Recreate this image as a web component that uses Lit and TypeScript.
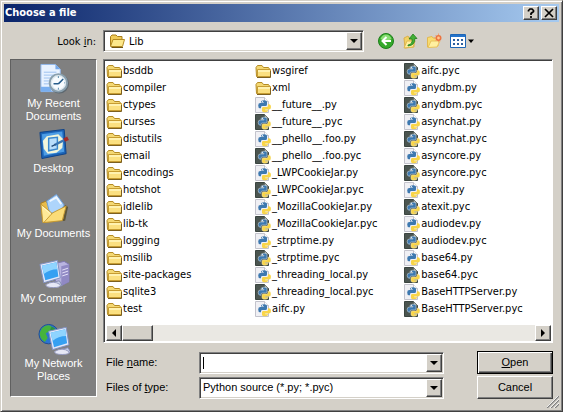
import { LitElement, html, css, svg } from "lit";
import { customElement } from "lit/decorators.js";

const folder = svg`
  <path d="M1 4.5 2.5 2.5H7L8.5 4.5H13.5L14.5 6V13.5H1.5Z" fill="#f4d873" stroke="#b48b24"/>
  <path d="M2.5 6.5H15.5V13.5H2.5Z" fill="#fbe080" stroke="#c79d32"/>
  <path d="M3 7.5H15M3 8.5H15" stroke="#fff2b0"/>
  <path d="M2 14.5H15.5V8" fill="none" stroke="#7c6020"/>`;

const openFolder = svg`
  <path d="M1.5 13V3.5L3 2H7L8.5 3.5H13V6" fill="#f0cb58" stroke="#a97e1b"/>
  <path d="M1.5 13.5 4 6.5H15.5L13.5 13.5Z" fill="#fde88b" stroke="#b48b24"/>
  <path d="M2.5 14.5H14" stroke="#6f5412"/>`;

const python = (compiled: boolean) => svg`
  <path d="M0.5 0.5H9.5L13.5 4.5V15.5H0.5Z" fill="${compiled ? "#4b5550" : "#f0f0f4"}" stroke="${compiled ? "#3b4540" : "#c3c3cc"}"/>
  <path d="M9.5 0.5V4.5H13.5" fill="${compiled ? "#a9b0ac" : "#fff"}" stroke="${compiled ? "#5b6560" : "#c3c3cc"}"/>
  <path d="M9 3.2C11.5 3.2 12 4 12 5.2V7.4Q12 9 10.4 9H7.4Q6 9 6 10.4V11.2H5Q3.2 11 3.2 8.4 3.2 6 5.4 6H9V5.4H6V4.8Q6 3.2 9 3.2Z" fill="#3d79b0" stroke="${compiled ? "#dfe6ea" : "none"}" stroke-width=".5"/>
  <path d="M10.2 15.2C7.6 15.2 7 14.4 7 13.4V11.2Q7 10 8.4 10H11.6Q13 10 13 8.4V7.2H14.2Q16 7.4 16 10 16 12.6 13.8 12.6H10.2V13.2H13V13.8Q13 15.2 10.2 15.2Z" fill="#f9d548" stroke="${compiled ? "#f4ecc4" : "none"}" stroke-width=".5"/>
  <circle cx="7.4" cy="4.6" r=".6" fill="#fff"/>`;

const monitor = svg`
  <path d="M13 25 22 23 25 28 15 30Z" fill="#c9cfe8" stroke="#8288b0"/>
  <path d="M8 27Q16 22 23 27 24 30 16 30 8 30 8 27Z" fill="#e6e8f6" stroke="#9499bd"/>
  <path d="M2 6 20 2 23 20 6 25Z" fill="#e3e8fa" stroke="#7f8fc0"/>
  <path d="M4 7.5 19 4 21 18.5 7.5 22.5Z" fill="#36a0f2"/>
  <path d="M4 7.5 19 4 20 11Q12 11 6 16Z" fill="#8fd4ff"/>`;

const places = [
  { label: "My Recent Documents", icon: svg`
    <path d="M3 1H18L23 6V29H3Z" fill="#e8f2ff" stroke="#8fb7ea"/>
    <path d="M18 1V6H23Z" fill="#76a8e8"/>
    <path d="M6 9H19M6 12H17M6 15H14M6 18H13M6 21H13" stroke="#9cc0ee"/>
    <path d="M3 24H14V29H3Z" fill="#78aef0"/>
    <circle cx="22" cy="21" r="10" fill="#5e6870"/>
    <circle cx="21" cy="20" r="9" fill="#dfe9ef" stroke="#8aa0ae" stroke-width="2"/>
    <circle cx="21" cy="20" r="6.5" fill="#f8fcff"/>
    <path d="M21 21 26 16M21 21H16" stroke="#275d8b" stroke-width="1.6"/>
    <path d="M21 13V15M21 25V27M27 20H28" stroke="#58a"/>` },
  { label: "Desktop", icon: svg`
    <path d="M2 4 27 1 29 26 4 31Z" fill="#1c65b8" stroke="#0d4288"/>
    <path d="M4 6 25 3 27 24 6 28Z" fill="#4d9de5"/>
    <path d="M9 8 21 6 26 11 25 20 19 25 10 26 6 21 5 13Z" fill="#f2f6dc"/>
    <path d="M11 10 20 9V21L11 23Z" fill="#b9defb" stroke="#3b88cd" stroke-width="1.5"/>
    <path d="M17 17 27 12" stroke="#3a76b4" stroke-width="2.4"/>
    <path d="M14 18.5 18 16.5" stroke="#1c4674" stroke-width="1.4"/>
    <path d="M27 12 31 10" stroke="#a32b28" stroke-width="4"/>` },
  { label: "My Documents", icon: svg`
    <path d="M5 30 28 28 31 14 28 12" fill="#5c5438"/>
    <path d="M3 10 8 8 12 12 24 12 26 26 5 29Z" fill="#e9bc4a" stroke="#aa7e20"/>
    <path d="M9 8 19 1 27 12 22 20 12 20Z" fill="#aed5fb" stroke="#6c9fdc"/>
    <path d="M12 8 19 4 24 11" fill="none" stroke="#eef7ff" stroke-width="2"/>
    <path d="M3 11 14 20 16 29 5 30Z" fill="#ffe998" stroke="#c69a33"/>
    <path d="M15 20 29 13 25 28 6 30Z" fill="#fbdc78" stroke="#c69a33"/>
    <path d="M5 14 13 21" fill="none" stroke="#fff8cd"/>` },
  { label: "My Computer", icon: svg`
    <path d="M18 5 27 3 32 6V24L24 28 18 24Z" fill="#b9b4e0" stroke="#7f78b3"/>
    <path d="M24 8 32 6V24L24 28Z" fill="#9089c4"/>
    <path d="M25 12 31 10M25 15 31 13M25 18 31 16" stroke="#e6e3fa"/>
    ${monitor}` },
  { label: "My Network Places", icon: svg`
    <circle cx="11" cy="11" r="10" fill="#2c74cf" stroke="#1c4c96"/>
    <path d="M4 5Q9 0 14 3L12 8 8 10 10 15 7 19Q1 15 2 9Z" fill="#46b33c"/>
    <path d="M14 3Q20 5 20 11L15 12 12 8Z" fill="#2d9440"/>
    <g transform="translate(9 2)">${monitor}</g>` },
];

const files = [
  "bsddb", "compiler", "ctypes", "curses", "distutils", "email", "encodings", "hotshot", "idlelib",
  "lib-tk", "logging", "msilib", "site-packages", "sqlite3", "test", "wsgiref", "xml",
  "__future__.py", "__future__.pyc", "__phello__.foo.py", "__phello__.foo.pyc",
  "_LWPCookieJar.py", "_LWPCookieJar.pyc", "_MozillaCookieJar.py", "_MozillaCookieJar.pyc",
  "_strptime.py", "_strptime.pyc", "_threading_local.py", "_threading_local.pyc", "aifc.py",
  "aifc.pyc", "anydbm.py", "anydbm.pyc", "asynchat.py", "asynchat.pyc", "asyncore.py", "asyncore.pyc",
  "atexit.py", "atexit.pyc", "audiodev.py", "audiodev.pyc", "base64.py", "base64.pyc",
  "BaseHTTPServer.py", "BaseHTTPServer.pyc",
];

const iconFor = (name: string) =>
  name.endsWith(".pyc") ? python(true) : name.endsWith(".py") ? python(false) : folder;

const small = (content: unknown) =>
  html`<svg class="small" viewBox="0 0 16 16" aria-hidden="true">${content}</svg>`;

const arrow = (d: string) =>
  html`<svg class="arrow" viewBox="0 0 8 8" aria-hidden="true"><path d=${d} /></svg>`;
const DOWN = "M0 2H8L4 6Z";
const LEFT = "M6 0V8L2 4Z";
const RIGHT = "M2 0V8L6 4Z";

@customElement("app-root")
export class AppRoot extends LitElement {
  static styles = css`
    :host {
      display: block;
      font: 11px/13px "Liberation Sans", Arial, sans-serif;
      color: #000;
    }
    * { box-sizing: border-box; }
    button, input, select { font: inherit; color: inherit; margin: 0; padding: 0; border-radius: 0; }
    svg { display: block; flex: none; }
    .small { width: 16px; height: 16px; }
    .arrow { width: 8px; height: 8px; }
    .tahoma { font-family: "DejaVu Sans Condensed", "DejaVu Sans", sans-serif; }
    .window {
      background: #d4d0c8;
      border: 1px solid;
      border-color: #d4d0c8 #404040 #404040 #d4d0c8;
      box-shadow: inset 1px 1px #fff, inset -1px -1px #808080;
      padding: 3px;
      min-height: 100vh;
      position: relative;
    }
    .title {
      display: flex;
      align-items: center;
      gap: 2px;
      height: 18px;
      padding: 0 2px 0 1px;
      background: linear-gradient(90deg, #0a246a, #a6caf0);
      color: #fff;
    }
    .title h1 { flex: 1; margin: 0; font-size: 11px; line-height: 18px; font-weight: bold; }
    .raised {
      display: flex;
      align-items: center;
      justify-content: center;
      background: #d4d0c8;
      border: 1px solid;
      border-color: #fff #404040 #404040 #fff;
      box-shadow: inset -1px -1px #808080;
      color: #000;
    }
    .title .raised { width: 16px; height: 14px; }
    .glyph { width: 10px; height: 10px; }
    .body {
      display: grid;
      grid-template-columns: 87px minmax(0, 1fr);
      gap: 7px 6px;
      padding: 8px 6px 9px;
    }
    .look { grid-column: 1 / -1; display: flex; align-items: center; }
    .look > label { width: 93px; padding-right: 7px; text-align: right; }
    .field {
      display: flex;
      position: relative;
      height: 22px;
      padding: 1px;
      background: #fff;
      border: 1px solid;
      border-color: #808080 #fff #fff #808080;
      box-shadow: inset 1px 1px #404040, inset -1px -1px #d4d0c8;
    }
    .look .field { flex: 0 1 261px; }
    .field select, .field input {
      flex: 1;
      min-width: 0;
      appearance: none;
      border: 0;
      outline: 0;
      background: transparent;
      padding: 0 18px 0 2px;
    }
    .look select { padding-left: 24px; }
    .field input { background: linear-gradient(#000, #000) 2px 3px / 1px 12px no-repeat; }
    .field .small { position: absolute; left: 5px; top: 2px; }
    .drop { position: absolute; right: 1px; top: 1px; bottom: 1px; width: 16px; pointer-events: none; }
    .tools { display: flex; align-items: center; gap: 8px; margin-left: 14px; }
    .tools button { display: flex; align-items: center; gap: 2px; border: 0; background: none; }
    .tools .tool-arrow { width: 6px; height: 8px; }
    .places {
      display: flex;
      flex-direction: column;
      align-self: start;
      padding: 3px 0 8px;
      background: #808080;
      border: 1px solid;
      border-color: #606060 #fff #fff #606060;
    }
    .place {
      display: flex;
      flex-direction: column;
      align-items: center;
      gap: 2px;
      min-height: 65px;
      padding: 0 8px;
      border: 0;
      background: none;
      color: #fff;
      text-align: center;
    }
    .place.wide { padding: 0; }
    .place svg { width: 32px; height: 32px; }
    .main { display: flex; flex-direction: column; gap: 8px; }
    .list {
      background: #fff;
      border: 1px solid;
      border-color: #808080 #fff #fff #808080;
      box-shadow: inset 1px 1px #404040;
      padding: 2px 1px 1px 2px;
    }
    .files {
      display: grid;
      grid-template-rows: repeat(15, 17px);
      grid-auto-flow: column;
      grid-auto-columns: 33.5%;
      margin: 0;
      padding: 0 0 8px;
      list-style: none;
      overflow: hidden;
    }
    .files li { display: flex; align-items: center; gap: 1px; white-space: nowrap; }
    .scroll { display: flex; height: 16px; background: #eae8e3; }
    .scroll .raised { width: 16px; }
    .scroll .thumb { width: 31px; }
    .scroll .end { margin-left: auto; }
    .form {
      display: grid;
      grid-template-columns: 96px minmax(0, 245px) minmax(76px, 1fr);
      row-gap: 2px;
      align-items: center;
    }
    .form label { padding-left: 3px; }
    .form .action { width: 76px; height: 23px; justify-self: end; }
    .form .open { border-color: #000; box-shadow: inset 1px 1px #fff, inset -1px -1px #404040, inset -2px -2px #808080; }
    .grip { position: absolute; right: 3px; bottom: 3px; width: 12px; height: 12px; }
  `;

  render() {
    return html`
      <main class="window">
        <header class="title tahoma">
          <h1>Choose a file</h1>
          <button class="raised" aria-label="Help">
            <svg class="glyph" viewBox="0 0 10 10"><path d="M2.5 3.5V2.5L4 1H6L7.5 2.5V3.5L5 5.5V7M5 8V10" fill="none" stroke="#000" stroke-width="1.7"/></svg>
          </button>
          <button class="raised" aria-label="Close">
            <svg class="glyph" viewBox="0 0 10 10"><path d="M1 1 9 9M9 1 1 9" stroke="#000" stroke-width="1.7"/></svg>
          </button>
        </header>
        <div class="body">
          <div class="look tahoma">
            <label for="look">Look <u>i</u>n:</label>
            <div class="field">
              ${small(openFolder)}
              <select id="look"><option>Lib</option></select>
              <span class="raised drop">${arrow(DOWN)}</span>
            </div>
            <div class="tools">
              <button aria-label="Back">${small(svg`
                <circle cx="8" cy="8" r="7.5" fill="#35a82b" stroke="#1c7f1a"/>
                <path d="M2.5 6Q4 1.5 8 1.5T13.5 6Q8 9 2.5 6Z" fill="#8ade75"/>
                <path d="M13 8H5M8.5 4 4.5 8 8.5 12" fill="none" stroke="#fff" stroke-width="2"/>`)}</button>
              <button aria-label="Up one level">${small(svg`
                <path d="M2 5 6 3 7 5H12V14L3 15Z" fill="#f3d264" stroke="#dab04a"/>
                <path d="M2 15 5 8H13L11 14Z" fill="#fff0a0" stroke="#dfb850"/>
                <path d="M6 12Q11 11 10 6H7L11 1 15 5.5H12.8Q13.5 12 6 13Z" fill="#42b035" stroke="#227d1d" stroke-width=".8"/>`)}</button>
              <button aria-label="New folder">${small(svg`
                <path d="M1.5 14V4.5L6 3.5 7 5H12V13Z" fill="#f8dc70" stroke="#e2b850"/>
                <path d="M2 14.5 5 8H14L11 14Z" fill="#fff0a0" stroke="#e8c25c"/>
                <circle cx="12.5" cy="5" r="2.2" fill="#ffc890" stroke="#ec7440" stroke-width="1.6"/>
                <path d="M12.5 .5V2M12.5 8V9.5M8 5H9.5M9.5 2 10.5 3M9.5 8 10.5 7" stroke="#f0a070"/>`)}</button>
              <button aria-label="View menu">${small(svg`
                <path d="M.5 1.5H15.5V14.5H.5Z" fill="#fff" stroke="#1e66b5"/>
                <path d="M1 2H15V4H1Z" fill="#2474cc"/>
                <path d="M3 6H5V8H3ZM7 6H9V8H7ZM11 6H13V8H11ZM3 10H5V12H3ZM7 10H9V12H7ZM11 10H13V12H11Z" fill="#2c5f9e"/>`)}
                <svg class="tool-arrow" viewBox="0 0 6 8"><path d="M0 2.5H6L3 6Z"/></svg></button>
            </div>
          </div>
          <nav class="places" aria-label="Places">
            ${places.map((p) => html`
              <button class="place ${p.label === "My Documents" || p.label === "My Computer" ? "wide" : ""}">
                <svg viewBox="0 0 33 32" aria-hidden="true">${p.icon}</svg>
                <span>${p.label}</span>
              </button>`)}
          </nav>
          <div class="main">
            <section class="list" aria-label="Files">
              <ul class="files tahoma">
                ${files.map((f) => html`<li>${small(iconFor(f))}<span>${f}</span></li>`)}
              </ul>
              <div class="scroll">
                <button class="raised" aria-label="Scroll left">${arrow(LEFT)}</button>
                <span class="raised thumb"></span>
                <button class="raised end" aria-label="Scroll right">${arrow(RIGHT)}</button>
              </div>
            </section>
            <form class="form" @submit=${(e: Event) => e.preventDefault()}>
              <label for="name">File <u>n</u>ame:</label>
              <div class="field">
                <input id="name" type="text" autocomplete="off" />
                <span class="raised drop">${arrow(DOWN)}</span>
              </div>
              <button class="raised action open"><span><u>O</u>pen</span></button>
              <label for="type">Files of <u>t</u>ype:</label>
              <div class="field">
                <select id="type"><option>Python source (*.py; *.pyc)</option></select>
                <span class="raised drop">${arrow(DOWN)}</span>
              </div>
              <button class="raised action" type="button">Cancel</button>
            </form>
          </div>
        </div>
        <svg class="grip" viewBox="0 0 12 12" aria-hidden="true">
          <path d="M0 12 12 0M4 12 12 4M8 12 12 8" stroke="#808080" stroke-width="1.4"/>
          <path d="M-1 12 12 -1M3 12 12 3M7 12 12 7" stroke="#fff" stroke-width=".8"/>
        </svg>
      </main>
    `;
  }
}
